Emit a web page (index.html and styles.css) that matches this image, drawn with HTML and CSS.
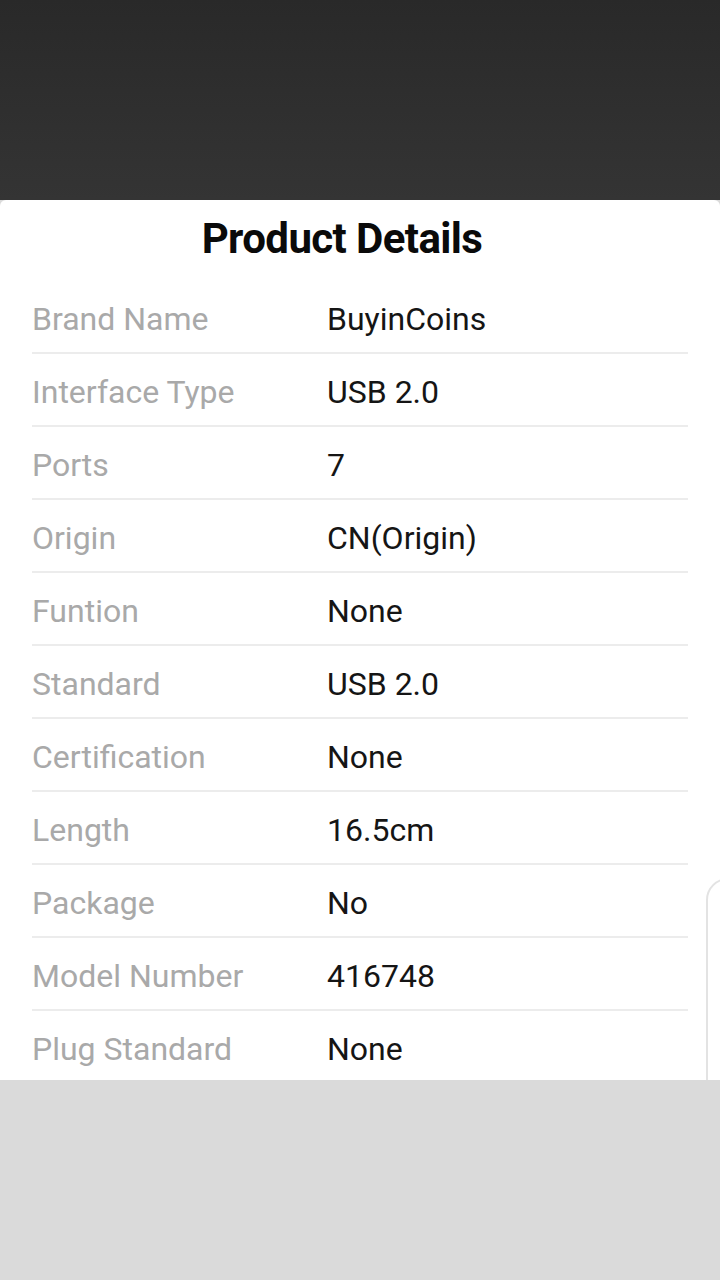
FILE: index.html
```html
<!DOCTYPE html>
<html lang="en">
<head>
  <meta charset="UTF-8" />
  <meta name="viewport" content="width=device-width, initial-scale=1.0" />
  <title>Product Details</title>
  <link rel="stylesheet" href="styles.css">
</head>
<body>
  <!-- Dimmed page behind the sheet -->
  <div class="backdrop"></div>

  <!-- Product details sheet -->
  <div class="sheet">
    <h1 class="sheet-title">Product Details</h1>
    <div class="details">
      <div class="row"><span class="label">Brand Name</span><span class="value">BuyinCoins</span></div>
      <div class="row"><span class="label">Interface Type</span><span class="value">USB 2.0</span></div>
      <div class="row"><span class="label">Ports</span><span class="value">7</span></div>
      <div class="row"><span class="label">Origin</span><span class="value">CN(Origin)</span></div>
      <div class="row"><span class="label">Funtion</span><span class="value">None</span></div>
      <div class="row"><span class="label">Standard</span><span class="value">USB 2.0</span></div>
      <div class="row"><span class="label">Certification</span><span class="value">None</span></div>
      <div class="row"><span class="label">Length</span><span class="value">16.5cm</span></div>
      <div class="row"><span class="label">Package</span><span class="value">No</span></div>
      <div class="row"><span class="label">Model Number</span><span class="value">416748</span></div>
      <div class="row"><span class="label">Plug Standard</span><span class="value">None</span></div>
    </div>
    <!-- edge of a floating button peeking in from the right -->
    <div class="side-tab"></div>
  </div>

  <div class="footer-area"></div>
</body>
</html>
```

FILE: styles.css
```css
body {
  margin: 0;
  font-family: Roboto, "Noto Sans", Arial, sans-serif;
  background-color: #dadada;
}
.backdrop {
  height: 200px;
  background: linear-gradient(#292929, #343434);
}
.sheet {
  position: relative;
  height: 880px;
  overflow: hidden;
  background: white;
  border-radius: 6px 6px 0 0;
}
.sheet-title {
  margin: 0;
  height: 81px;
  line-height: 78px;
  text-align: center;
  font-size: 42px;
  font-weight: bold;
  letter-spacing: -0.6px;
  color: #0a0a0a;
  padding-right: 36px;
}
.details {
  margin: 0 32px;
}
.row {
  display: grid;
  grid-template-columns: 295px 1fr;
  height: 66px;
  padding-top: 5px;
  line-height: 66px;
  border-bottom: 2px solid #ececec;
  font-size: 32px;
}
.label { color: #a9a9a9; }
.value { color: #151515; }
.side-tab {
  position: absolute;
  top: 678px;
  left: 706px;
  width: 40px;
  height: 300px;
  border: 2px solid #e3e3e3;
  border-radius: 22px;
  background: white;
}
.footer-area {
  height: 200px;
}
```
